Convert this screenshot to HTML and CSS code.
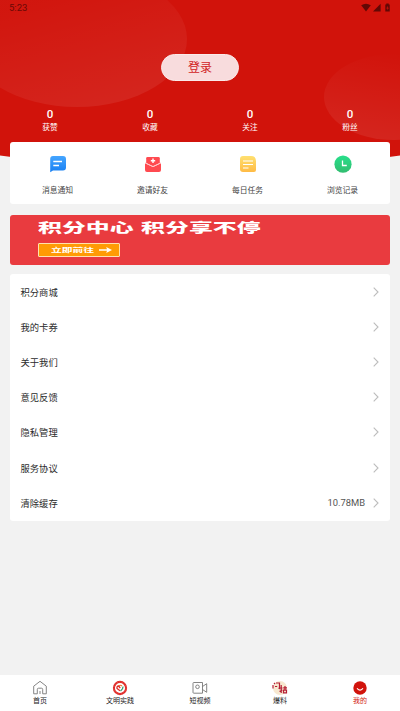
FILE: index.html
```html
<!DOCTYPE html>
<html lang="zh-CN">
<head>
<meta charset="utf-8">
<title>我的</title>
<link rel="stylesheet" href="styles.css">
</head>
<body>
<div class="app">
  <svg class="backdrop" width="400" height="172" viewBox="0 0 400 172">
    <defs>
      <linearGradient id="glowLeft" x1="0.3" y1="0" x2="0.75" y2="1"><stop offset="0.2" stop-color="#fff" stop-opacity="0.015"/><stop offset="1" stop-color="#fff" stop-opacity="0.08"/></linearGradient>
      <linearGradient id="glowRight" x1="0.6" y1="0" x2="0.3" y2="1"><stop offset="0" stop-color="#fff" stop-opacity="0"/><stop offset="1" stop-color="#fff" stop-opacity="0.08"/></linearGradient>
      <clipPath id="hero"><path d="M0 0H400V155.500Q200 185.500 0 155.500Z"/></clipPath>
    </defs>
    <g clip-path="url(#hero)">
      <rect width="400" height="172" fill="#d1130b"/>
      <ellipse cx="77" cy="39" rx="110" ry="68" fill="url(#glowLeft)"/>
      <ellipse cx="394" cy="97" rx="70" ry="43" fill="url(#glowRight)"/>
    </g>
  </svg>

  <header class="status">
    <span>5:23</span>
    <svg width="32" height="12" viewBox="0 0 32 12">
      <path d="M1.2 2.2Q6 -.8 10.8 2.2L6 8.6Z"/>
      <path d="M20.6 .8V8.5H13Z"/>
      <path d="M25.3 1.6H26.3V.5H28.7V1.6H29.7V8.6H25.3Z"/>
      <path class="bolt" d="M27.7 2.8L26.3 5.4H27.4V7.3L28.8 4.7H27.7Z"/>
    </svg>
  </header>
  <button class="login">登录</button>

  <section class="stats">
    <div><b>0</b><span>获赞</span></div>
    <div><b>0</b><span>收藏</span></div>
    <div><b>0</b><span>关注</span></div>
    <div><b>0</b><span>粉丝</span></div>
  </section>

  <section class="shortcuts">
    <div>
      <svg width="18" height="18" viewBox="0 0 18 18"><defs><linearGradient id="blue" x2="0" y2="1"><stop stop-color="#45a5ff"/><stop offset="1" stop-color="#187ff2"/></linearGradient></defs><path fill="url(#blue)" d="M4 1H14Q17 1 17 4V12.500Q17 15.500 14 15.500H4L1.200 17.300V4Q1.200 1 4 1Z"/><path stroke="#fff" stroke-width="1.300" d="M4.300 6.500H13M4.300 10.500H10"/></svg>
      <span>消息通知</span>
    </div>
    <div>
      <svg width="18" height="18" viewBox="0 0 18 18"><path fill="#ff4a50" d="M3.500 2H14.500Q15.800 2 15.800 3.300V8L9 11.200L2.200 8V3.300Q2.200 2 3.500 2Z"/><path fill="#ff4a50" d="M1 8.200L9 12L17 8.200V15Q17 17 15 17H3Q1 17 1 15Z"/><path fill="none" stroke="#ffc5c5" stroke-width=".8" d="M1 7.800L9 11.600L17 7.800"/><path stroke="#fff" stroke-width="1.400" d="M9 3.600V8M6.800 5.800H11.200"/></svg>
      <span>邀请好友</span>
    </div>
    <div>
      <svg width="18" height="18" viewBox="0 0 18 18"><defs><linearGradient id="gold" x2="0" y2="1"><stop stop-color="#ffe070"/><stop offset="1" stop-color="#ffbb45"/></linearGradient></defs><path fill="url(#gold)" d="M4 1H12Q17 1 17 6V15Q17 17 15 17H4Q1 17 1 14V4Q1 1 4 1Z"/><path stroke="#fff" stroke-width="1.200" d="M4 6H14M4 9.500H14M4 13H9.500"/></svg>
      <span>每日任务</span>
    </div>
    <div>
      <svg width="18" height="18" viewBox="0 0 18 18"><defs><linearGradient id="green" x2="0" y2="1"><stop stop-color="#28df8b"/><stop offset="1" stop-color="#32bd70"/></linearGradient></defs><circle cx="9" cy="9.200" r="8.600" fill="url(#green)"/><path fill="none" stroke="#fff" stroke-width="1.300" d="M8.500 5.500V10.500H12.800"/></svg>
      <span>浏览记录</span>
    </div>
  </section>

  <section class="banner">
    <h2>积分中心<i></i>积分享不停</h2>
    <a class="go"><span>立即前往</span><svg width="14" height="6" viewBox="0 0 14 6"><path fill="#fff" d="M0 2.200H8L7.200 0L13 3L7.200 6L8 3.800H0Z"/></svg></a>
  </section>

  <ul class="menu">
    <li>积分商城<svg class="chevron" viewBox="0 0 6 10"><path d="M.7 .7L5 5L.7 9.300"/></svg></li>
    <li>我的卡券<svg class="chevron" viewBox="0 0 6 10"><path d="M.7 .7L5 5L.7 9.300"/></svg></li>
    <li>关于我们<svg class="chevron" viewBox="0 0 6 10"><path d="M.7 .7L5 5L.7 9.300"/></svg></li>
    <li>意见反馈<svg class="chevron" viewBox="0 0 6 10"><path d="M.7 .7L5 5L.7 9.300"/></svg></li>
    <li>隐私管理<svg class="chevron" viewBox="0 0 6 10"><path d="M.7 .7L5 5L.7 9.300"/></svg></li>
    <li>服务协议<svg class="chevron" viewBox="0 0 6 10"><path d="M.7 .7L5 5L.7 9.300"/></svg></li>
    <li>清除缓存<span class="value">10.78MB</span><svg class="chevron" viewBox="0 0 6 10"><path d="M.7 .7L5 5L.7 9.300"/></svg></li>
  </ul>

  <nav class="tabs">
    <a><svg width="16" height="16" viewBox="0 0 16 16"><path class="line" d="M1.700 6.200L8 1.300L14.300 6.200V13.800H10.700V9.500Q10.700 8.200 9.500 8.200H6.500Q5.300 8.200 5.300 9.500V13.800H1.700ZM8 11V14"/></svg><span>首页</span></a>
    <a><svg width="16" height="16" viewBox="0 0 16 16"><circle cx="8" cy="8" r="6.100" fill="#fff" stroke="#df2926" stroke-width="2.100"/><circle cx="8" cy="8" r="6.100" fill="none" stroke="#f7a09a" stroke-width=".4" stroke-dasharray=".8 1"/><path fill="none" stroke="#df2926" stroke-width="1.300" d="M8 10.800L5 8.500Q4.600 6 6.600 6L8.200 8"/><path fill="none" stroke="#e77932" stroke-width="1.200" d="M6.500 5.800Q8.500 4.600 10 6"/><path fill="none" stroke="#36a173" stroke-width="1.200" d="M10.800 6.500Q11.500 8.300 8.500 11"/></svg><span>文明实践</span></a>
    <a><svg width="16" height="16" viewBox="0 0 16 16"><path class="line" d="M1.800 2.500H10.500V13.200H1.800Q1 13.200 1 12.400V3.300Q1 2.500 1.800 2.500ZM10.500 6.500L14.700 3.700V12.300L10.500 9.500"/><circle class="line" cx="5.500" cy="6.800" r="1.800"/></svg><span>短视频</span></a>
    <a><svg width="16" height="16" viewBox="0 0 16 16"><circle cx="8" cy="8" r="7" fill="#f7e8d0"/><path fill="none" stroke="#b51f35" stroke-width="1.200" d="M1 5V8.500M2 3L3 4M4 3H7.500V8.500L6.500 8M3 6.500H5.200M9.200 5V13M7.800 8H10.500M7.500 11.500L10.300 10M11.200 7.800H15M13 6V9.700M11.500 10.200H14.500V12.800H11.500Z"/></svg><span>爆料</span></a>
    <a class="current"><svg width="16" height="16" viewBox="0 0 16 16"><circle cx="8" cy="8" r="6.700" fill="#d1130b"/><path fill="none" stroke="#fff" stroke-width="1.100" stroke-linecap="round" d="M5.300 8.700Q8 11.600 10.700 8.700"/></svg><span>我的</span></a>
  </nav>
</div>
</body>
</html>
```

FILE: styles.css
```css
* { box-sizing: border-box; }
body {
  margin: 0;
  background: #f2f2f2;
  color: #333;
  font-family: Roboto, "Noto Sans CJK SC", sans-serif;
}
.app {
  position: relative;
  width: 400px;
  height: 711px;
  overflow: hidden;
  display: flex;
  flex-direction: column;
}
.app > * { position: relative; flex-shrink: 0; }
.app > .backdrop { position: absolute; top: 0; left: 0; }
.status {
  height: 54px;
  padding: 1px 8px 0 9px;
  display: flex;
  justify-content: space-between;
  align-items: flex-start;
  color: #6a0906;
  font-size: 9.500px;
  line-height: 14px;
}
.status svg { margin-top: 2px; fill: #620805; }
.status .bolt { fill: #d1130b; }
.login {
  align-self: center;
  width: 78px;
  height: 27px;
  padding: 2px 0 0;
  border: 1px solid #fbeaea;
  border-radius: 14px;
  background: #f8dcdd;
  color: #d1231d;
  font: 12px/23px Roboto, "Noto Sans CJK SC", sans-serif;
}
.stats {
  display: grid;
  grid-template-columns: repeat(4, 1fr);
  height: 61px;
  padding-top: 26px;
  color: #fff;
  text-align: center;
}
.stats b, .stats span { display: block; }
.stats b { font-size: 11.500px; line-height: 15px; font-weight: 500; }
.stats span { font-size: 7.700px; line-height: 12px; }
.shortcuts {
  display: grid;
  grid-template-columns: repeat(4, 1fr);
  height: 62px;
  margin: 0 10px;
  padding-top: 13px;
  border-radius: 3px;
  background: #fff;
}
.shortcuts div { display: flex; flex-direction: column; align-items: center; gap: 11.500px; }
.shortcuts span { font-size: 7.800px; line-height: 12px; color: #444; }
.banner {
  height: 50px;
  margin: 10.500px 10px 0;
  padding: 4px 28px;
  border-radius: 3px;
  background: #e93b3f;
  color: #fff;
}
.banner h2 {
  display: flex;
  width: max-content;
  margin: 0;
  font: 900 13px/16px "Noto Sans CJK SC", sans-serif;
  transform: scaleX(1.840);
  transform-origin: 0 50%;
}
.banner h2 i { width: 4px; }
.go {
  display: flex;
  align-items: center;
  width: 82px;
  height: 14px;
  margin-top: 8px;
  padding-left: 12px;
  border: 1px solid #ffe0ad;
  border-radius: 1px;
  background: #ff9b05;
}
.go span {
  width: 48px;
  margin-bottom: 2px;
  font: 700 11px/12px "Noto Sans CJK SC", sans-serif;
  white-space: nowrap;
  transform: scale(.98, .54);
  transform-origin: 0 50%;
}
.menu {
  height: 246.500px;
  margin: 9.500px 10px 0;
  padding: 0 11px 0 10.500px;
  border-radius: 3px;
  background: #fff;
  list-style: none;
}
.menu li {
  display: flex;
  align-items: center;
  height: 35.200px;
  font-size: 9.300px;
  color: #2b2b2b;
}
.chevron {
  width: 6px;
  height: 10px;
  margin-left: auto;
  fill: none;
  stroke: #bdbdbd;
  stroke-width: 1.100;
}
.value { margin-left: auto; font-size: 9.400px; color: #555; }
.value + .chevron { margin-left: 8px; }
.tabs {
  display: grid;
  grid-template-columns: repeat(5, 1fr);
  height: 36px;
  margin-top: auto;
  padding-top: 5px;
  background: #fff;
}
.tabs a { display: flex; flex-direction: column; align-items: center; color: #222; }
.tabs span { font-size: 7px; line-height: 10px; }
.tabs .line { fill: none; stroke: #777; stroke-width: .9; }
.tabs .current { color: #d1130b; }
```
